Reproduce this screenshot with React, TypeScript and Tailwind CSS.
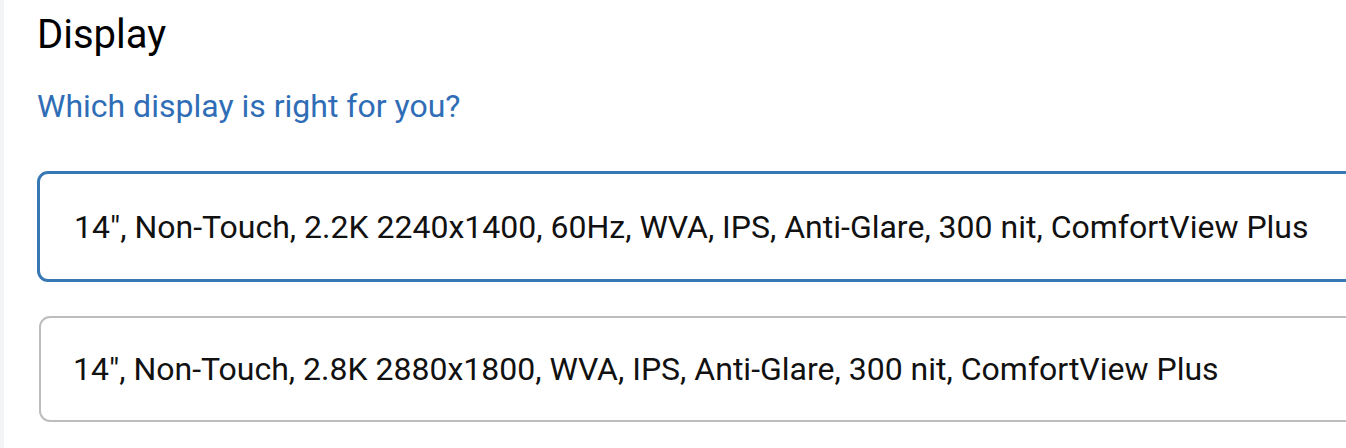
const options = [
  { id: "a", label: '14", Non-Touch, 2.2K 2240x1400, 60Hz, WVA, IPS, Anti-Glare, 300 nit, ComfortView Plus', selected: true },
  { id: "b", label: '14", Non-Touch, 2.8K 2880x1800, WVA, IPS, Anti-Glare, 300 nit, ComfortView Plus', selected: false },
];

export default function App() {
  return (
    <div className="flex h-[448px] w-[1346px] overflow-hidden bg-white font-['Roboto',sans-serif]">
      <div className="w-[4px] shrink-0 bg-[#f3f4f6]" />
      <div className="flex flex-col pl-[33px] pt-[12px]">
        <h2 className="text-[40px] leading-[46px] text-black">Display</h2>
        <a className="mt-[29px] text-[32px] leading-[38px] text-[#2f6db6]">Which display is right for you?</a>
        <div className="mt-[46px] flex flex-col gap-[34px]">
          {options.map((o) =>
            o.selected ? (
              <div
                key={o.id}
                className="flex h-[111px] w-[1360px] items-center rounded-[11px] border-[3px] border-[#3777b4] pl-[34px]"
              >
                <span className="text-[32px] text-[#111]">{o.label}</span>
              </div>
            ) : (
              <div
                key={o.id}
                className="ml-[2px] flex h-[106px] w-[1360px] items-center rounded-[11px] border-2 border-[#bdbdbd] pl-[32px]"
              >
                <span className="text-[32px] text-[#111]">{o.label}</span>
              </div>
            )
          )}
        </div>
      </div>
    </div>
  );
}
